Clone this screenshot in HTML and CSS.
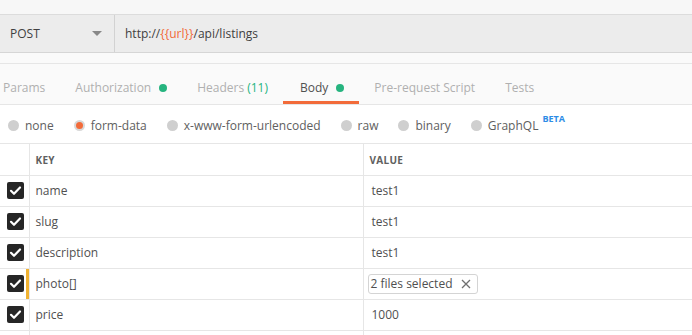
FILE: index.html
```html
<!DOCTYPE html>
<html lang="en">
<head>
    <meta charset="UTF-8">
    <title>Request - Body</title>
    <link rel="stylesheet" href="styles.css">
</head>
<body>
    <div class="top-strip"></div>

    <div class="url-bar">
        <div class="method">
            <span>POST</span>
            <span class="caret"></span>
        </div>
        <div class="url">http://<span class="var">{{url}}</span>/api/listings</div>
    </div>

    <div class="spacer"></div>

    <div class="tabs">
        <div class="tab">Params</div>
        <div class="tab">Authorization <span class="dot"></span></div>
        <div class="tab">Headers <span class="count">(11)</span></div>
        <div class="tab active">Body <span class="dot"></span></div>
        <div class="tab">Pre-request Script</div>
        <div class="tab">Tests</div>
    </div>

    <div class="body-types">
        <label class="type"><span class="radio"></span>none</label>
        <label class="type"><span class="radio selected"></span>form-data</label>
        <label class="type"><span class="radio"></span>x-www-form-urlencoded</label>
        <label class="type"><span class="radio"></span>raw</label>
        <label class="type"><span class="radio"></span>binary</label>
        <label class="type"><span class="radio"></span>GraphQL<sup class="beta">BETA</sup></label>
    </div>

    <table class="params">
        <thead>
            <tr>
                <th class="check-col"></th>
                <th class="key-col">KEY</th>
                <th>VALUE</th>
            </tr>
        </thead>
        <tbody>
            <tr>
                <td class="check-col"><span class="checkbox"></span></td>
                <td>name</td>
                <td>test1</td>
            </tr>
            <tr>
                <td class="check-col"><span class="checkbox"></span></td>
                <td>slug</td>
                <td>test1</td>
            </tr>
            <tr>
                <td class="check-col"><span class="checkbox"></span></td>
                <td>description</td>
                <td>test1</td>
            </tr>
            <tr class="file-row">
                <td class="check-col"><span class="checkbox"></span></td>
                <td>photo[]</td>
                <td>
                    <span class="file-chip">2 files selected
                        <svg width="10" height="10" viewBox="0 0 10 10"><path d="M1 1L9 9M9 1L1 9" stroke="#707070" stroke-width="1.3" fill="none"/></svg>
                    </span>
                </td>
            </tr>
            <tr>
                <td class="check-col"><span class="checkbox"></span></td>
                <td>price</td>
                <td>1000</td>
            </tr>
            <tr>
                <td class="check-col"></td>
                <td></td>
                <td></td>
            </tr>
        </tbody>
    </table>
</body>
</html>
```

FILE: styles.css
```css
:root {
    --orange: #f26b3a;
    --green: #26b47f;
    --text: #505050;
    --muted: #b0b0b0;
    --line: #e6e6e6;
}

* {
    margin: 0;
    padding: 0;
    box-sizing: border-box;
}

html,
body {
    height: 100%;
    overflow: hidden;
}

body {
    font-family: 'Open Sans', sans-serif;
    font-size: 12px;
    color: var(--text);
    background: #fafafa;
}

.top-strip {
    height: 15px;
    background: #f7f7f7;
    border-bottom: 1px solid #dcdcdc;
}

.url-bar {
    display: flex;
    height: 38px;
    background: #ececec;
    border-bottom: 1px solid #d6d6d6;
}

.method {
    width: 115px;
    display: flex;
    align-items: center;
    justify-content: space-between;
    padding: 0 12px 0 10px;
    border-right: 1px solid #d2d2d2;
    color: #404040;
}

.caret {
    width: 0;
    height: 0;
    border-left: 5px solid transparent;
    border-right: 5px solid transparent;
    border-top: 5px solid #888;
}

.url {
    display: flex;
    align-items: center;
    padding-left: 10px;
    color: #404040;
}

.url .var {
    color: var(--orange);
}

.spacer {
    height: 11px;
    border-bottom: 1px solid var(--line);
}

.tabs {
    display: flex;
    height: 41px;
    margin-left: -12px;
    border-bottom: 1px solid var(--line);
}

.tab {
    display: flex;
    align-items: center;
    gap: 6px;
    padding: 10px 15px 0;
    color: var(--muted);
    border-bottom: 3px solid transparent;
}

.tab.active {
    color: var(--text);
    border-bottom-color: var(--orange);
    padding-left: 17px;
}

.dot {
    width: 8px;
    height: 8px;
    border-radius: 50%;
    background: var(--green);
    margin-left: 2px;
}

.count {
    color: var(--green);
    margin-left: -3px;
}

.body-types {
    display: flex;
    align-items: center;
    height: 39px;
    padding: 3px 0 0 8px;
    background: #fff;
    border-bottom: 1px solid var(--line);
}

.type {
    display: flex;
    align-items: center;
    margin-right: 20px;
    color: #606060;
}

.radio {
    width: 11px;
    height: 11px;
    border-radius: 50%;
    background: #cfcfcf;
    margin-right: 6px;
    position: relative;
}

.radio.selected {
    background: #d8d8d8;
}

.radio.selected::after {
    content: '';
    position: absolute;
    left: 2px;
    top: 2px;
    width: 7px;
    height: 7px;
    border-radius: 50%;
    background: var(--orange);
}

.beta {
    font-size: 9px;
    font-weight: 700;
    color: #2d8ce6;
    margin-left: 4px;
    position: relative;
    top: -7px;
}

.params {
    width: 100%;
    border-collapse: collapse;
    background: #fff;
}

.params th,
.params td {
    height: 31px;
    border-bottom: 1px solid var(--line);
    border-left: 1px solid var(--line);
    text-align: left;
    padding: 0 6px;
    font-weight: 400;
}

.params th {
    font-size: 10px;
    font-weight: 700;
    color: #606060;
    letter-spacing: 0.3px;
    padding-top: 2px;
}

.params .check-col {
    width: 29px;
    border-left: none;
    padding: 0 0 0 7px;
}

.params .key-col {
    width: 334px;
}

.params td:nth-child(3) {
    padding-left: 8px;
}

.checkbox {
    display: block;
    width: 17px;
    height: 17px;
    border-radius: 2px;
    background: #262626 url("data:image/svg+xml,%3Csvg xmlns='http://www.w3.org/2000/svg' viewBox='0 0 17 17'%3E%3Cpath d='M4 8.8l3 3 6-6.3' stroke='%23fff' stroke-width='2.2' fill='none' stroke-linecap='round' stroke-linejoin='round'/%3E%3C/svg%3E") no-repeat center;
}

.file-row .check-col {
    box-shadow: inset -3px 0 #f0b232;
}

.file-chip {
    display: inline-flex;
    align-items: center;
    gap: 9px;
    height: 20px;
    padding: 0 6px 0 2px;
    border: 1px solid #d4d4d4;
    border-radius: 3px;
    margin-left: -4px;
}
```
